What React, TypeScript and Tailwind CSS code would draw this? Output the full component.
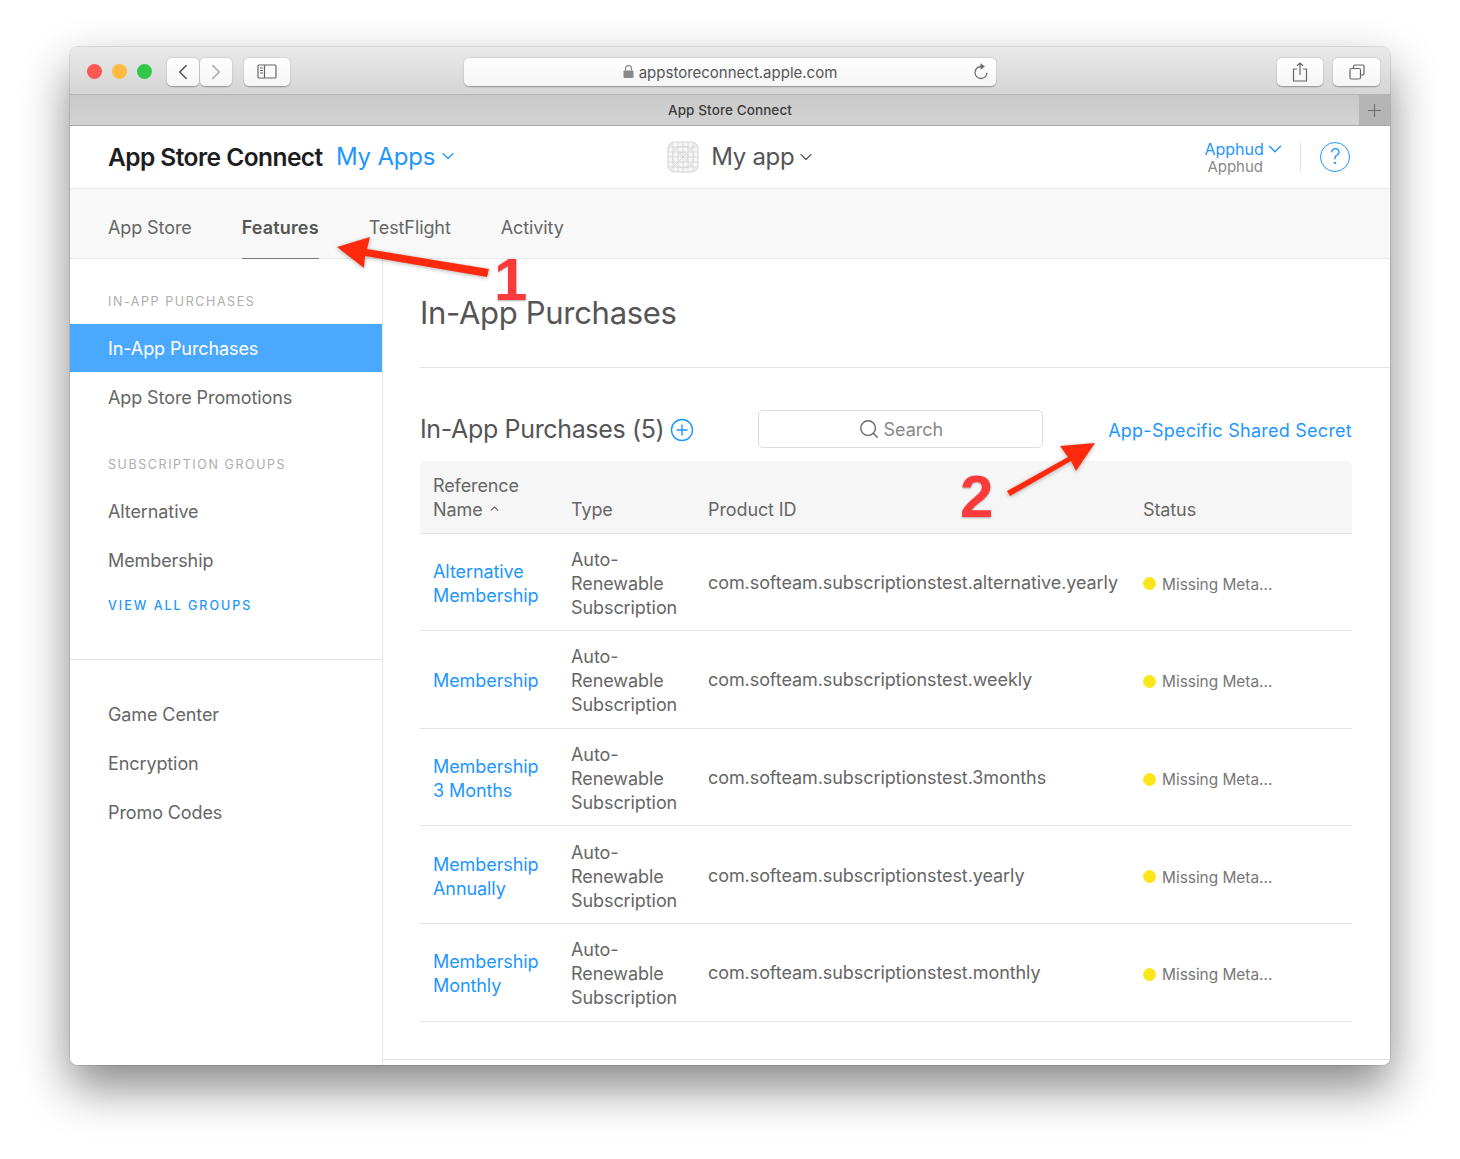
import React from "react";
import { ChevronLeft, ChevronRight, ChevronDown, ChevronUp, Search } from "lucide-react";

const rows = [
  { name: ["Alternative", "Membership"], id: "com.softeam.subscriptionstest.alternative.yearly" },
  { name: ["Membership"], id: "com.softeam.subscriptionstest.weekly" },
  { name: ["Membership", "3 Months"], id: "com.softeam.subscriptionstest.3months" },
  { name: ["Membership", "Annually"], id: "com.softeam.subscriptionstest.yearly" },
  { name: ["Membership", "Monthly"], id: "com.softeam.subscriptionstest.monthly" },
];

const ToolBtn = ({ className, children }: { className: string; children: React.ReactNode }) => (
  <div className={`flex h-[28px] items-center justify-center rounded-[5px] bg-gradient-to-b from-white to-[#f5f5f5] shadow-[0_0.5px_1.5px_rgba(0,0,0,0.35)] ${className}`}>
    {children}
  </div>
);

const SideItem = ({ label, className = "" }: { label: string; className?: string }) => (
  <div className={`flex h-[49px] items-center pl-[38px] text-[18px] tracking-[-0.1px] text-[#666] ${className}`}>{label}</div>
);

const SideHeading = ({ label, className }: { label: string; className: string }) => (
  <div className={`h-[18px] pl-[38px] text-[12.5px] leading-[18px] tracking-[1.58px] text-[#adadad] ${className}`}>{label}</div>
);

const AppIcon = () => (
  <svg width="32" height="32" viewBox="0 0 32 32" fill="none" stroke="#cfcfcf" strokeWidth="0.6">
    <rect x="1" y="1" width="30" height="30" rx="6.5" fill="#f6f6f6" stroke="#d2d2d2" strokeWidth="1" />
    <path d="M1 6h30M1 11h30M1 16h30M1 21h30M1 26h30M6 1v30M11 1v30M16 1v30M21 1v30M26 1v30M3 3l26 26M29 3L3 29" />
    <circle cx="16" cy="16" r="5" />
    <circle cx="16" cy="16" r="11" />
  </svg>
);

const Toolbar = () => (
  <div className="flex h-[48px] items-center border-b border-[#b4b4b4] bg-gradient-to-b from-[#e9e9e9] to-[#d5d5d5] pl-[17px] pt-[2px]">
    <div className="flex w-[75px] items-center gap-[10px]">
      <span className="h-[15px] w-[15px] rounded-full bg-[#fc5753]" />
      <span className="h-[15px] w-[15px] rounded-full bg-[#fdbc40]" />
      <span className="h-[15px] w-[15px] rounded-full bg-[#33c748]" />
    </div>
    <div className="ml-[5px] flex gap-px">
      <ToolBtn className="w-[32px]"><ChevronLeft size={26} strokeWidth={1.4} className="text-[#555]" /></ToolBtn>
      <ToolBtn className="w-[32px]"><ChevronRight size={26} strokeWidth={1.4} className="text-[#a8a8a8]" /></ToolBtn>
    </div>
    <ToolBtn className="ml-[12px] w-[46px]">
      <svg width="20" height="15" viewBox="0 0 20 15" fill="none" stroke="#666" strokeWidth="1.2">
        <rect x="1" y="1" width="18" height="13" rx="1" />
        <path d="M7.5 1v13M3 4h3M3 6.5h3M3 9h3" />
      </svg>
    </ToolBtn>
    <ToolBtn className="relative ml-[174px] w-[532px]">
      <svg width="11" height="13" viewBox="0 0 11 13" className="mr-[5px]" fill="#8a8a8a">
        <rect x="0.5" y="5.5" width="10" height="7.5" rx="1" />
        <path d="M2.5 5.5V3.7a3 3 0 0 1 6 0v1.8" fill="none" stroke="#8a8a8a" strokeWidth="1.2" />
      </svg>
      <span className="mt-[3px] text-[15px] text-[#555]">appstoreconnect.apple.com</span>
      <svg width="16" height="18" viewBox="0 0 16 18" fill="none" className="absolute right-[7px] top-[5px]">
        <path d="M8 3.5a6 6 0 1 0 6 6.2" stroke="#6e6e6e" strokeWidth="1.3" />
        <path d="M7.5 0.2 12 3.5 7.5 6.8Z" fill="#6e6e6e" />
      </svg>
    </ToolBtn>
    <ToolBtn className="ml-[281px] w-[46px]">
      <svg width="16" height="20" viewBox="0 0 16 20" fill="none" stroke="#666" strokeWidth="1.2">
        <path d="M5 7H1.5v12h13V7H11M8 13V1M5 3.8 8 1l3 2.8" />
      </svg>
    </ToolBtn>
    <ToolBtn className="ml-[10px] w-[47px]">
      <svg width="16" height="16" viewBox="0 0 16 16" fill="none" stroke="#666" strokeWidth="1.2">
        <rect x="1" y="4.5" width="10.5" height="10.5" rx="1.5" />
        <path d="M4.5 4.5V2.5A1.5 1.5 0 0 1 6 1h8a1.5 1.5 0 0 1 1 1.5v7a1.5 1.5 0 0 1-1.5 1.5h-2" />
      </svg>
    </ToolBtn>
  </div>
);

const TabBar = () => (
  <div className="flex h-[31px] border-b border-[#a9a9a9] bg-gradient-to-b from-[#c9c9c9] to-[#d3d3d3]">
    <div className="flex flex-1 items-center justify-center pl-[31px] text-[13.5px] font-medium tracking-[0.1px] text-[#3c3c3c]">App Store Connect</div>
    <div className="flex w-[31px] items-center justify-center bg-[#b5b5b5]">
      <svg width="15" height="15" viewBox="0 0 15 15" stroke="#6e6e6e" strokeWidth="1.2">
        <path d="M7.5 1v13M1 7.5h13" />
      </svg>
    </div>
  </div>
);

const Header = () => (
  <div className="flex h-[63px] items-center border-b border-[#ececec] bg-white pl-[38px]">
    <span className="w-[228px] text-[24.5px] font-semibold tracking-[-0.55px] text-[#1d1d1f]">App Store Connect</span>
    <span className="text-[24px] tracking-[-0.2px] text-[#1e96ff]">My Apps</span>
    <ChevronDown size={20} strokeWidth={1.4} className="ml-[3px] mt-[-3px] text-[#1e96ff]" />
    <div className="ml-[209px]"><AppIcon /></div>
    <span className="ml-[12px] text-[24px] tracking-[-0.3px] text-[#555]">My app</span>
    <ChevronDown size={20} strokeWidth={1.4} className="ml-[2px] text-[#555]" />
    <div className="ml-[388px] flex w-[80px] flex-col items-start pt-[2px]">
      <div className="flex items-center text-[16px] leading-[18px] text-[#1e96ff]">
        Apphud
        <ChevronDown size={22} strokeWidth={1.5} className="my-[-2px]" />
      </div>
      <div className="ml-[3px] text-[15px] leading-[18px] text-[#8a8a8a]">Apphud</div>
    </div>
    <div className="ml-[16px] h-[30px] w-px bg-[#e2e2e2]" />
    <div className="ml-[19px] flex h-[30px] w-[30px] items-center justify-center rounded-full border border-[#1e96ff] text-[21px] font-light text-[#1e96ff]">?</div>
  </div>
);

const Nav = () => (
  <div className="flex h-[70px] border-b border-[#e9e9e9] bg-[#f8f8f8] pl-[38px] text-[18px] text-[#666]">
    <div className="flex items-center pt-[8px] tracking-[-0.1px]">App Store</div>
    <div className="relative ml-[50px] flex items-center pt-[8px] font-semibold tracking-[0.15px] text-[#555]">
      Features
      <span className="absolute bottom-[-1px] left-0 right-0 h-[1.5px] bg-[#777]" />
    </div>
    <div className="ml-[50px] flex items-center pt-[8px] tracking-[-0.1px]">TestFlight</div>
    <div className="ml-[50px] flex items-center pt-[8px] tracking-[-0.1px]">Activity</div>
  </div>
);

const Sidebar = () => (
  <div className="w-[313px] shrink-0 border-r border-[#e6e6e6]">
    <SideHeading label="IN-APP PURCHASES" className="mt-[34px]" />
    <div className="mt-[13px] flex h-[48px] items-center bg-[#4aa8ff] pl-[38px] text-[18px] tracking-[-0.1px] text-white">In-App Purchases</div>
    <SideItem label="App Store Promotions" className="pt-[2px]" />
    <SideHeading label="SUBSCRIPTION GROUPS" className="mt-[35px]" />
    <div className="mt-[13px]">
      <SideItem label="Alternative" />
      <SideItem label="Membership" />
    </div>
    <div className="mt-[12px] h-[18px] pl-[38px] text-[12.5px] font-medium leading-[18px] tracking-[2px] text-[#1e96ff]">VIEW ALL GROUPS</div>
    <div className="mt-[44px] h-px bg-[#e4e4e4]" />
    <div className="mt-[30px]">
      <SideItem label="Game Center" />
      <SideItem label="Encryption" />
      <SideItem label="Promo Codes" />
    </div>
  </div>
);

const Main = () => (
  <div className="relative flex-1 pl-[37px]">
    <div className="flex h-[109px] items-center border-b border-[#e4e4e4] pt-[1px] text-[31px] tracking-[-0.3px] text-[#555]">In-App Purchases</div>
    <div className="flex h-[93px] items-center pb-[13px] pr-[38px] pt-[42px]">
      <span className="mt-[2px] text-[25px] tracking-[-0.35px] text-[#555]">In-App Purchases (5)</span>
      <svg width="24" height="24" viewBox="0 0 24 24" fill="none" stroke="#1e96ff" strokeWidth="1.4" className="ml-[6px] mt-[1px]">
        <circle cx="12" cy="12" r="10.5" />
        <path d="M12 6.5v11M6.5 12h11" />
      </svg>
      <div className="ml-[64px] flex h-[38px] w-[285px] items-center justify-center rounded-[5px] border border-[#dcdcdc] text-[18px] text-[#888]">
        <Search size={22} strokeWidth={1.5} className="mr-[3px] text-[#666]" />
        Search
      </div>
      <span className="ml-auto mt-[3px] text-[18px] tracking-[0.25px] text-[#1e96ff]">App-Specific Shared Secret</span>
    </div>
    <div className="mr-[38px]">
      <div className="grid h-[72.6px] grid-cols-[151px_137px_435px_1fr] items-end rounded-t-[6px] border-b border-[#e4e4e4] bg-[#f6f6f6] pb-[11px] text-[18px] leading-[24px] tracking-[-0.1px] text-[#666]">
        <div className="pl-[13px]">
          Reference
          <div className="flex items-center">
            Name
            <ChevronUp size={13} strokeWidth={2} className="ml-[5px] mb-[2px]" />
          </div>
        </div>
        <div>Type</div>
        <div>Product ID</div>
        <div>Status</div>
      </div>
      {rows.map((r) => (
        <div key={r.id} className="grid h-[97.6px] grid-cols-[151px_137px_435px_1fr] items-center border-b border-[#e4e4e4] text-[18px] leading-[24px] tracking-[-0.08px]">
          <div className="pl-[13px] pt-[4px] text-[#1e96ff]">
            {r.name.map((n) => <div key={n}>{n}</div>)}
          </div>
          <div className="pt-[4px] text-[#666]">
            <div>Auto-</div>
            <div>Renewable</div>
            <div>Subscription</div>
          </div>
          <div className="whitespace-nowrap pb-[2px] pt-[4px] text-[#666]">{r.id}</div>
          <div className="flex items-center pt-[4px] text-[15.4px] tracking-normal text-[#777]">
            <span className="mr-[6px] h-[13px] w-[13px] rounded-full bg-[#fbe61e]" />
            <span className="mt-[2px]">Missing Meta...</span>
          </div>
        </div>
      ))}
    </div>
    <div className="absolute bottom-[5px] left-0 right-0 h-px bg-[#e4e4e4]" />
  </div>
);

const Annotations = () => (
  <>
    <svg width="1460" height="1159" viewBox="0 0 1460 1159" className="pointer-events-none absolute left-0 top-0 drop-shadow-[0_1px_2px_rgba(0,0,0,0.3)]">
      <path d="M337 247 370 237 367 249 489 269 487 277 365 256 364 268Z" fill="#ff2a0d" />
      <path d="M1095 443 1060 446 1068 457 1007 491 1010 496 1071 461 1076 471Z" fill="#ff2a0d" />
    </svg>
    <span className="absolute left-[494px] top-[245px] text-[60px] font-bold leading-[70px] text-[#fb3b3b] [font-family:'Liberation_Sans',sans-serif] [text-shadow:0_1px_2px_rgba(0,0,0,0.3)]">1</span>
    <span className="absolute left-[960px] top-[462px] text-[60px] font-bold leading-[70px] text-[#fb3b3b] [font-family:'Liberation_Sans',sans-serif] [text-shadow:0_1px_2px_rgba(0,0,0,0.3)]">2</span>
  </>
);

export default function App() {
  return (
    <div className="relative h-[1159px] w-[1460px] overflow-hidden bg-white pl-[70px] pt-[47px] font-['Inter','Noto_Sans',sans-serif]">
      <div className="flex h-[1018px] w-[1320px] flex-col overflow-hidden rounded-[7px] bg-white shadow-[0_0_0_0.5px_rgba(0,0,0,0.2),0_22px_48px_rgba(0,0,0,0.48)]">
        <Toolbar />
        <TabBar />
        <Header />
        <Nav />
        <div className="flex flex-1">
          <Sidebar />
          <Main />
        </div>
      </div>
      <Annotations />
    </div>
  );
}
